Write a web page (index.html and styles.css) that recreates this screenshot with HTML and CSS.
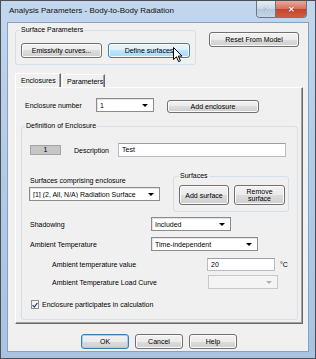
FILE: index.html
```html
<!DOCTYPE html>
<html lang="en">
  <head>
    <meta charset="UTF-8" />
    <title>Analysis Parameters - Body-to-Body Radiation</title>
    <link rel="stylesheet" href="styles.css">
  </head>
  <body>
    <div class="window">
      <div class="titlebar">
        <span class="title">Analysis Parameters - Body-to-Body Radiation</span>
        <div class="caption-btns">
          <span class="cap help">?</span>
          <span class="cap close">&#10005;</span>
        </div>
      </div>

      <div class="client">
        <div class="top-row">
          <fieldset class="group surf-params">
            <legend>Surface Parameters</legend>
            <div class="btn-row">
              <button class="btn emis">Emissivity curves...</button>
              <button class="btn define hover">
                Define surfaces
                <svg class="cursor" width="10" height="16" viewBox="0 0 10 16">
                  <path d="M0.5 0.5 L0.5 12.5 L3.5 9.8 L5.6 14.6 L7.4 13.8 L5.3 9.1 L9 9.1 Z" fill="#fff" stroke="#000" stroke-width="1" stroke-linejoin="round" />
                </svg>
              </button>
            </div>
          </fieldset>
          <button class="btn reset">Reset From Model</button>
        </div>

        <div class="tabs">
          <span class="tab active">Enclosures</span>
          <span class="tab">Parameters</span>
        </div>

        <div class="tab-panel">
          <div class="enc-row">
            <span class="lbl enc-lbl">Enclosure number</span>
            <div class="combo enc-combo"><span class="val">1</span><span class="arrow"></span></div>
            <button class="btn add-enc">Add enclosure</button>
          </div>

          <fieldset class="group def-group">
            <legend>Definition of Enclosure</legend>

            <div class="desc-row">
              <span class="id-box">1</span>
              <span class="lbl desc-lbl">Description</span>
              <div class="textbox desc-input">Test</div>
            </div>

            <div class="surf-row">
              <div class="surf-col">
                <span class="lbl">Surfaces comprising enclosure</span>
                <div class="combo surf-combo"><span class="val">[1] (2, All, N/A) Radiation Surface</span><span class="arrow"></span></div>
              </div>
              <fieldset class="group surf-group">
                <legend>Surfaces</legend>
                <div class="btn-row">
                  <button class="btn add-surf">Add surface</button>
                  <button class="btn rem-surf">Remove<br />surface</button>
                </div>
              </fieldset>
            </div>

            <div class="field-row shadow-row">
              <span class="lbl">Shadowing</span>
              <div class="combo shadow-combo"><span class="val">Included</span><span class="arrow"></span></div>
            </div>

            <div class="field-row amb-row">
              <span class="lbl">Ambient Temperature</span>
              <div class="combo amb-combo"><span class="val">Time-independent</span><span class="arrow"></span></div>
            </div>

            <div class="sub-row val-row">
              <span class="lbl">Ambient temperature value</span>
              <div class="textbox temp-input">20</div>
              <span class="unit">&deg;C</span>
            </div>

            <div class="sub-row curve-row">
              <span class="lbl">Ambient Temperature Load Curve</span>
              <div class="combo disabled curve-combo"><span class="val"></span><span class="arrow"></span></div>
            </div>

            <label class="check-row">
              <span class="checkbox">
                <svg width="6" height="6" viewBox="0 0 6 6">
                  <path d="M0.6 3.2 L2.3 5 L5.4 0.8" fill="none" stroke="#2a3f6e" stroke-width="1.2" />
                </svg>
              </span>
              <span class="lbl">Enclosure participates in calculation</span>
            </label>
          </fieldset>
        </div>

        <div class="dialog-btns">
          <button class="btn default">OK</button>
          <button class="btn">Cancel</button>
          <button class="btn">Help</button>
        </div>
      </div>
    </div>
  </body>
</html>
```

FILE: styles.css
```css
/* Reset */
* {
  margin: 0;
  padding: 0;
  box-sizing: border-box;
}

body {
  font-family: "Liberation Sans", Arial, sans-serif;
  font-size: 7px;
  color: #000;
  background: #fff;
}

/* Window frame */
.window {
  width: 316px;
  height: 359px;
  border: 1px solid #4d4f55;
  background: linear-gradient(180deg, #c2d7ee 0%, #b3cce8 40%, #a9c3e2 100%);
  padding: 0 6px 6px 6px;
  display: flex;
  flex-direction: column;
}

.titlebar {
  height: 21px;
  display: flex;
  align-items: flex-start;
  padding-left: 2px;
}

.title {
  font-size: 8px;
  margin-top: 5px;
  line-height: 10px;
  color: #111;
}

.caption-btns {
  margin-left: auto;
  margin-right: 2px;
  display: flex;
  border: 1px solid #6a7684;
  border-top: none;
  border-radius: 0 0 4px 4px;
  overflow: hidden;
}

.cap {
  height: 16px;
  display: flex;
  align-items: center;
  justify-content: center;
  font-size: 8px;
  font-weight: 700;
}

.cap.help {
  width: 19px;
  color: #f4f7fa;
  background: linear-gradient(180deg, #e3ecf5 0%, #c9d8e9 50%, #b4c7dd 50%, #c5d6e8 100%);
  border-right: 1px solid #6a7684;
  text-shadow: 0 0 1px #45505e;
}

.cap.close {
  width: 30px;
  color: #fff;
  background: linear-gradient(180deg, #e9a99c 0%, #d7705d 50%, #c2432c 50%, #d05c3f 100%);
  text-shadow: 0 0 1px #3a1008;
}

.client {
  flex: 1;
  background: #f0f0f0;
  border: 1px solid #8ba1bb;
  padding: 3px 0 0 7px;
  display: flex;
  flex-direction: column;
}

/* Group boxes */
.group {
  border: 1px solid #d5dfe5;
  border-radius: 3px;
}

.group legend {
  line-height: 8px;
  padding: 0 1px;
}

.btn-row {
  display: flex;
  gap: 6px;
}

/* Buttons */
.btn {
  font-family: inherit;
  font-size: 7px;
  color: #000;
  height: 15px;
  border: 1px solid #707070;
  border-radius: 3px;
  background: linear-gradient(180deg, #f2f2f2 0%, #ebebeb 50%, #dddddd 50%, #cfcfcf 100%);
  box-shadow: inset 0 0 0 1px #fbfbfb;
  line-height: 1;
}

.btn.hover {
  border-color: #3c7fb1;
  background: linear-gradient(180deg, #eaf6fd 0%, #d9f0fc 50%, #bee6fd 50%, #a7d9f5 100%);
  position: relative;
}

.btn.default {
  border-color: #3c7fb1;
  box-shadow: inset 0 0 0 1px #8fd6f7;
}

.cursor {
  position: absolute;
  left: 64px;
  top: 3px;
}

/* Top row */
.top-row {
  display: flex;
  align-items: flex-start;
}

.surf-params {
  width: 178px;
  height: 39px;
  padding: 9px 5px 0 5px;
}

.surf-params legend {
  margin-left: -1px;
}

.btn.emis {
  width: 81px;
}

.btn.define {
  width: 82px;
}

.btn.reset {
  width: 90px;
  margin: 6px 0 0 13px;
}

/* Tabs */
.tabs {
  display: flex;
  margin-top: 8px;
  height: 14px;
}

.tab {
  height: 14px;
  padding: 0 4px;
  line-height: 13px;
  border-top: 1px solid #fff;
  border-left: 1px solid #fff;
  border-right: 1px solid #696969;
  box-shadow: inset -1px 0 0 #a0a0a0;
}

.tab.active {
  width: 46px;
  padding-left: 5px;
}

.tab:not(.active) {
  width: 43px;
  margin-left: 1px;
  margin-top: 1px;
  padding-left: 4px;
}

.tab-panel {
  width: 288px;
  height: 237px;
  border-top: 1px solid #fff;
  border-left: 1px solid #fff;
  border-right: 1px solid #696969;
  border-bottom: 1px solid #696969;
  box-shadow: inset -1px -1px 0 #a0a0a0;
  padding: 9px 0 0 9px;
  display: flex;
  flex-direction: column;
}

/* Form controls */
.combo {
  height: 14px;
  background: #fff;
  border: 1px solid #8c8c8c;
  box-shadow: inset 1px 1px 0 #e3e3e3;
  display: flex;
  align-items: center;
  padding: 0 5px 0 3px;
}

.combo .val {
  flex: 1;
  white-space: nowrap;
  overflow: hidden;
}

.combo .arrow {
  width: 0;
  height: 0;
  border-left: 3px solid transparent;
  border-right: 3px solid transparent;
  border-top: 3px solid #000;
}

.combo.disabled {
  background: #f4f4f4;
  border-color: #c8c8c8;
  box-shadow: none;
}

.combo.disabled .arrow {
  border-top-color: #b0b0b0;
}

.textbox {
  height: 14px;
  background: #fff;
  border: 1px solid #b8bcc4;
  border-top-color: #9a9ea6;
  padding: 0 3px;
  line-height: 12px;
}

/* Enclosure row */
.enc-row {
  display: flex;
  align-items: center;
  height: 16px;
}

.enc-lbl {
  width: 71px;
}

.enc-combo {
  width: 58px;
}

.btn.add-enc {
  width: 92px;
  height: 13px;
  margin: 3px 0 0 13px;
}

/* Definition group */
.def-group {
  width: 277px;
  margin: 9px 0 0 -4px;
  height: 198px;
  padding: 13px 0 0 8px;
}

.def-group legend {
  margin-left: -5px;
}

.desc-row {
  display: flex;
  align-items: center;
  height: 14px;
}

.id-box {
  width: 31px;
  height: 10px;
  background: #c6c6c6;
  border: 1px solid #a4a4a4;
  text-align: center;
  line-height: 8px;
}

.desc-lbl {
  margin-left: 13px;
  width: 44px;
}

.desc-input {
  width: 168px;
}

.surf-row {
  display: flex;
  margin-top: 15px;
}

.surf-col {
  display: flex;
  flex-direction: column;
  gap: 3px;
  padding-top: 5px;
}

.surf-combo {
  width: 131px;
  margin-left: -1px;
}

.surf-group {
  width: 116px;
  height: 40px;
  margin-left: 13px;
  padding: 5px 0 0 5px;
}

.surf-group legend {
  margin-left: 0;
}

.btn.add-surf {
  width: 50px;
  height: 20px;
}

.btn.rem-surf {
  width: 51px;
  height: 20px;
  margin-left: -1px;
}

.field-row {
  display: grid;
  grid-template-columns: 121px auto;
  align-items: center;
}

.shadow-row {
  margin-top: 5px;
}

.amb-row {
  margin-top: 6px;
}

.shadow-combo {
  width: 80px;
}

.amb-combo {
  width: 107px;
}

.sub-row {
  display: grid;
  grid-template-columns: 155px auto auto;
  align-items: center;
  padding-left: 22px;
  justify-content: start;
}

.val-row {
  margin-top: 7px;
}

.temp-input {
  width: 68px;
  height: 13px;
}

.unit {
  margin-left: 5px;
}

.curve-row {
  margin-top: 4px;
}

.curve-combo {
  width: 70px;
  margin-left: 1px;
}

.check-row {
  display: flex;
  align-items: center;
  gap: 3px;
  margin-top: 11px;
  margin-left: 1px;
}

.checkbox {
  width: 8px;
  height: 9px;
  background: linear-gradient(135deg, #f0f0f0, #fff);
  border: 1px solid #8f8f8f;
  display: flex;
  align-items: center;
  justify-content: center;
}

/* Dialog buttons */
.dialog-btns {
  display: flex;
  gap: 6px;
  margin-top: 10px;
  padding-left: 66px;
}

.dialog-btns .btn {
  width: 48px;
}
```
